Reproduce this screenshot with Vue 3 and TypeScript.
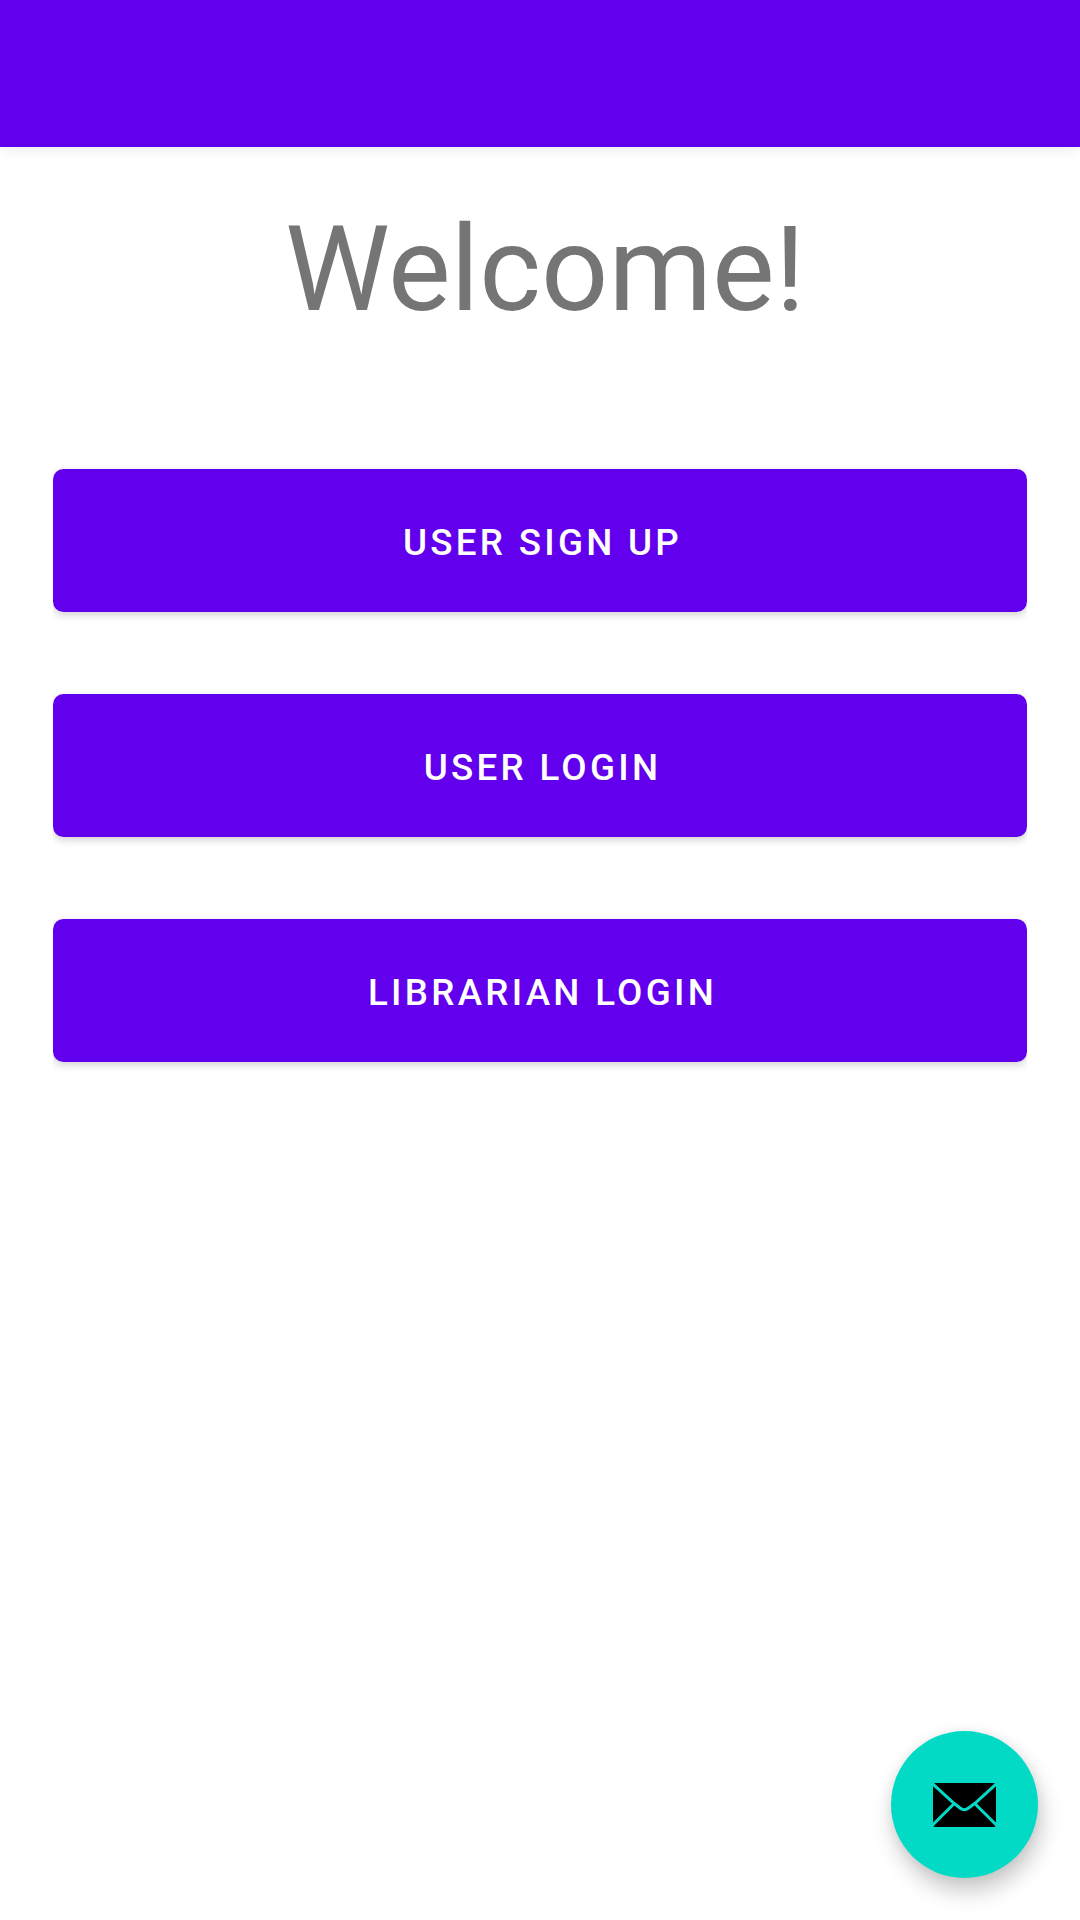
<script setup lang="ts">
const actions: string[] = ['User Sign Up', 'User Login', 'Librarian Login']
</script>

<template>
  <div class="screen">
    <header class="app-bar"></header>
    <main class="content">
      <h1 class="title">Welcome!</h1>
      <nav class="actions">
        <button v-for="label in actions" :key="label" class="action" type="button">{{ label }}</button>
      </nav>
    </main>
    <button class="fab" type="button" aria-label="Contact">
      <svg class="mail" viewBox="0 0 63 44" width="63" height="44">
        <rect width="63" height="44" rx="2" fill="#000" />
        <path
          d="M-2 -0.5 L0 1.2 L21 20.3 L27 25 Q31.3 28.4 35.6 25 L42 20.3 L63 1.2 L65 -0.5 M-2 43.5 L21 20.8 M65 43.5 L42 20.8"
          fill="none"
          stroke="#03dac5"
          stroke-width="3"
        />
      </svg>
    </button>
  </div>
</template>

<style>
body {
  margin: 0;
  background: #fff;
}
</style>

<style scoped>
.screen {
  display: flex;
  flex-direction: column;
  position: relative;
  width: 1080px;
  height: 1920px;
  overflow: hidden;
  background: #fff;
  font-family: Roboto, sans-serif;
}

.app-bar {
  flex: none;
  height: 147px;
  background: #6200ee;
  box-shadow: 0 3px 12px rgba(0, 0, 0, 0.08);
}

.content {
  display: flex;
  flex-direction: column;
  padding: 53px 53px 0;
}

.title {
  height: 140px;
  margin: 0;
  padding-left: 10px;
  color: #757575;
  font-size: 118.125px;
  font-weight: 400;
  line-height: 140px;
  text-align: center;
}

.actions {
  display: flex;
  flex-direction: column;
  gap: 82px;
  margin-top: 129px;
}

.action {
  height: 143px;
  padding: 4px 0 0 5px;
  border: 0;
  border-radius: 10.5px;
  background: #6200ee;
  box-shadow: 0 3px 8px rgba(0, 0, 0, 0.18);
  clip-path: inset(-20px 0);
  color: #fff;
  font-family: inherit;
  font-size: 36.75px;
  font-weight: 500;
  letter-spacing: 0.0892857em;
  line-height: 43px;
  text-transform: uppercase;
}

.fab {
  display: flex;
  align-items: center;
  justify-content: center;
  position: absolute;
  right: 42px;
  bottom: 42px;
  width: 147px;
  height: 147px;
  padding: 0;
  border: 0;
  border-radius: 50%;
  background: #03dac5;
  box-shadow: 3px 13px 22px rgba(0, 0, 0, 0.22), 0 0 12px rgba(0, 0, 0, 0.06);
}

.mail {
  display: block;
}
</style>
